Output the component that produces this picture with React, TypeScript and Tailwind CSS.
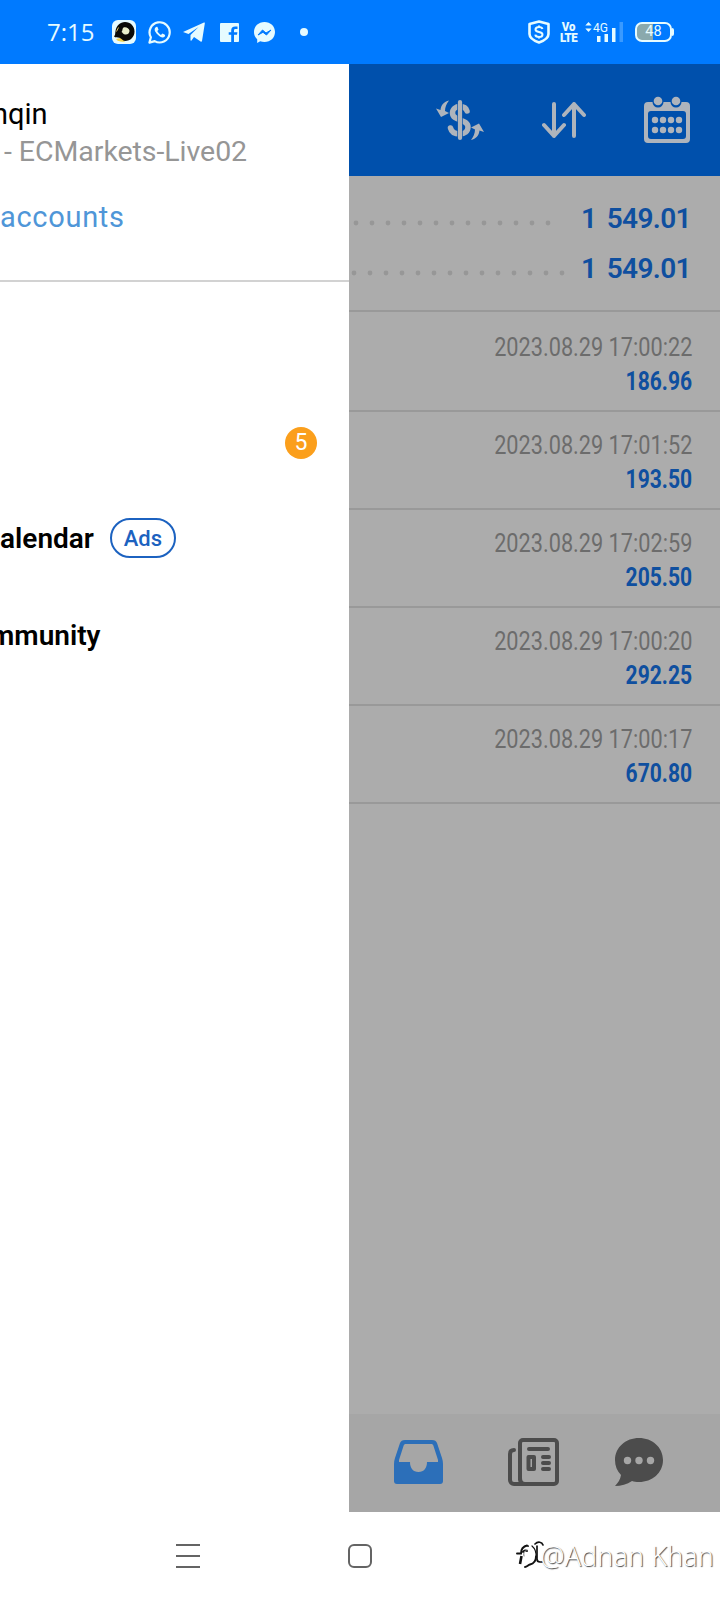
import type { ReactNode } from "react";

type Deal = {
  time: string;
  amount: string;
};

const deals: Deal[] = [
  { time: "2023.08.29 17:00:22", amount: "186.96" },
  { time: "2023.08.29 17:01:52", amount: "193.50" },
  { time: "2023.08.29 17:02:59", amount: "205.50" },
  { time: "2023.08.29 17:00:20", amount: "292.25" },
  { time: "2023.08.29 17:00:17", amount: "670.80" },
];

function StatusBar() {
  return (
    <header className="flex h-16 shrink-0 items-center bg-[#007aff] pl-[47px] text-[#e6fbff]">
      <span className="w-[65px] font-['Open_Sans',sans-serif] text-[24px] leading-none">7:15</span>
      <svg width="24" height="24" viewBox="0 0 24 24">
        <rect width="24" height="24" rx="6" fill="#e6fbff" />
        <path d="M4 19c2 2.500 5 3 9 2.500l-3-4Z" fill="#f2d24a" />
        <path d="M13 2c5.500 0 9.500 4.200 9.500 9.500S18.500 21 13 21c-2.500 0-3.500-2.500-5.500-3.200C5.500 17 3.500 18 2 16.500c1.500-1.500 1-3 1.500-5.500C4.500 5.500 8 2 13 2Z" fill="#0b0b08" />
        <path d="M11.500 7.500c2.500-1 5.500.8 6 3 .3 2.500-2 4.500-4.500 4s-2-2-3.500-2.500c1.300-1 .5-3.500 2-4.500Z" fill="#e9efcb" />
        <path d="m4.500 11.500 2-4" stroke="#d8c060" strokeWidth="1" />
      </svg>
      <svg className="ml-3" width="23" height="23" viewBox="0 0 24 24" fill="none" stroke="currentColor">
        <path d="M1.500 22.500 3 17A10.500 10.500 0 1 1 7 21Z" strokeWidth="2.300" strokeLinejoin="round" />
        <path d="M8 6.500c-2 2-1 4.500 2 7.500s5.500 4 7.500 2.200c.6-.6.5-1.600-.3-2L15 13l-1.500 1.500C12 14 10.500 12 9.700 10.500L11 9 10 6.500c-.4-.8-1.400-.6-2 0Z" fill="currentColor" stroke="none" />
      </svg>
      <svg className="ml-3" width="22" height="20" viewBox="0 0 22 20" fill="currentColor">
        <path d="M0 10 21 .6c.7-.3 1 0 .8.800L19 19c-.2.800-.8.900-1.400.500L11 15l-2.500 3.500c-.6.500-1 .2-1-.5V13l8-8L5.500 12Z" />
      </svg>
      <svg className="ml-[15px]" width="19" height="19" viewBox="0 0 19 19">
        <rect width="19" height="19" rx="1" fill="#e6fbff" />
        <path d="M11.200 19v-7.200H8.700V9.200h2.500V7.500c0-2.500 1.300-4 4-4h2.300V6h-1.800c-1.400 0-1.700.6-1.700 1.800v1.400h3.400l-.4 2.600h-3V19Z" fill="#007aff" />
      </svg>
      <svg className="ml-[15px]" width="21" height="21" viewBox="0 0 21 21">
        <path d="M10.500 0C4.500 0 0 4.300 0 10c0 3 1.200 5.500 3.200 7.300V21l3-1.700c1.300.4 2.800.7 4.300.7C16.500 20 21 15.700 21 10S16.500 0 10.500 0Z" fill="#e6fbff" />
        <path d="m4 13 4.500-5 3.500 3 5-3-4.500 5L9 10.300Z" fill="#007aff" stroke="#007aff" strokeLinejoin="round" />
      </svg>
      <span className="ml-[25px] size-2 rounded-full bg-current" />

      <svg className="ml-[220px]" width="22" height="24" viewBox="0 0 22 24" fill="none" stroke="currentColor">
        <path d="M11 1.500 20.500 4v10c0 4-4 6.500-9.500 8.500C5.500 20.500 1.500 18 1.500 14V4Z" strokeWidth="2.600" strokeLinejoin="round" />
        <path d="M14.500 9c-.5-1.500-1.800-2-3.500-2-2 0-3.500.8-3.500 2.500 0 3.500 7 1.500 7 5 0 1.700-1.500 2.500-3.500 2.500s-3.500-.8-3.700-2.300M11 5.500V7M11 17v1.500" strokeWidth="2" />
      </svg>
      <div className="ml-2.5 flex w-[17px] origin-center scale-x-[0.88] flex-col items-center font-['Roboto',sans-serif] text-[13px] leading-[11px] font-black">
        <span>Vo</span>
        <span className="-tracking-[0.6px]">LTE</span>
      </div>
      <svg className="ml-2 overflow-visible" width="38" height="22" viewBox="0 0 38 22" fill="currentColor">
        <path d="m3.500 1 3.200 3.500H.3ZM3.500 11 .3 7.500h6.400Z" />
        <path d="M12 15h3.500v6H12ZM19.500 13H23v8h-3.500ZM27 7h3.500v14H27Z" />
        <path d="M34.500 1H38v20h-3.500Z" opacity=".25" />
        <text x="8" y="11" fontFamily="Roboto, sans-serif" fontSize="13.500" textLength="15" lengthAdjust="spacingAndGlyphs">
          4G
        </text>
      </svg>
      <div className="ml-[12px] flex items-center">
        <span className="flex h-5 w-[37px] items-center justify-center rounded-[7px] border-2 border-current bg-linear-to-r from-[#8aa9ad] from-48% to-transparent to-48% font-['Roboto',sans-serif] text-[14.5px] leading-none">
          48
        </span>
        <span className="h-2 w-0.5 rounded-r bg-current" />
      </div>
    </header>
  );
}

function Drawer() {
  return (
    <aside className="flex w-[349px] shrink-0 flex-col overflow-hidden bg-white whitespace-nowrap">
      <div className="h-[218px] shrink-0 border-b-2 border-[#d2d2d2] pt-8">
        <p className="-ml-[8px] text-[29px] leading-9 text-black">nqin</p>
        <p className="ml-1 text-[28.5px] leading-10 -tracking-[0.05px] text-[#969696]">- ECMarkets-Live02</p>
        <p className="mt-[27px] text-[29px] leading-9 tracking-[0.7px] text-[#4f96d8]">accounts</p>
      </div>
      <nav className="flex flex-col pt-28">
        <div className="flex h-[97px] items-center justify-end pr-8">
          <span className="flex size-8 items-center justify-center rounded-full bg-[#fb9f1c] text-[23px] leading-none text-white">5</span>
        </div>
        <div className="flex h-[94px] items-center">
          <span className="pt-px text-[28px] font-semibold text-black">alendar</span>
          <span className="ml-4 flex h-10 w-[66px] items-center justify-center rounded-full border-2 border-[#1c62c0] text-[22px] font-medium text-[#1c62c0]">
            Ads
          </span>
        </div>
        <div className="flex h-[101px] items-center">
          <span className="-ml-[10px] text-[28px] font-semibold text-black">mmunity</span>
        </div>
      </nav>
    </aside>
  );
}

function Toolbar() {
  return (
    <div className="flex h-28 shrink-0 items-center bg-[#0050ac] pl-[87px] text-[#aeb4bc]">
      <svg width="48" height="42" viewBox="0 0 48 42" fill="none" stroke="currentColor" strokeLinecap="round">
        <path d="M31 12c-1-3-3.500-4.500-7-4.500-4.500 0-7.500 2.500-7.500 6.500 0 8.500 15.500 5.500 15.500 14 0 4.500-3.500 7-8 7-5 0-8.500-2-9.500-6" strokeWidth="5.500" />
        <path d="M24 3v36" stroke="#0050ac" strokeWidth="5.500" strokeLinecap="butt" />
        <path d="M24 3v36" strokeWidth="4.200" />
        <path d="M13 1.500C8 2.500 5 6 4.500 11L0 9.500 5 18l8-4-4-2c0-4 1.500-7 4-10.500ZM35 41c5-1 8-4.500 8.500-9.500L48 33l-5-8.500-8 4 4 2c0 4-1.500 7-4 10.500Z" fill="currentColor" stroke="none" />
      </svg>
      <svg className="ml-[58px]" width="44" height="38" viewBox="0 0 44 38" fill="none" stroke="currentColor" strokeWidth="4" strokeLinecap="round" strokeLinejoin="round">
        <path d="M12 3v32M2 24l10 11 10-11M32 35V3M22 14 32 3l10 11" />
      </svg>
      <svg className="ml-[58px]" width="46" height="48" viewBox="0 0 46 48">
        <path fillRule="evenodd" d="M4 6h38a4 4 0 0 1 4 4v33a4 4 0 0 1-4 4H4a4 4 0 0 1-4-4V10a4 4 0 0 1 4-4Zm3 9a3 3 0 0 0-3 3v22a3 3 0 0 0 3 3h32a3 3 0 0 0 3-3V18a3 3 0 0 0-3-3Z" fill="currentColor" />
        <path d="M14 5v1M32 5v1" stroke="#0050ac" strokeWidth="11" strokeLinecap="round" />
        <circle cx="14" cy="5" r="4.300" fill="currentColor" />
        <circle cx="32" cy="5" r="4.300" fill="currentColor" />
        {[24, 34].map((y) => [11, 19, 27, 35].map((x) => <circle key={`${x}-${y}`} cx={x} cy={y} r="3.200" fill="currentColor" />))}
      </svg>
    </div>
  );
}

function TotalRow({ children, leader }: { children: ReactNode; leader: ReactNode }) {
  return (
    <div className="flex h-[50px] items-center justify-between pr-[29px]">
      {leader}
      <span className="text-[28px] leading-none font-semibold -tracking-[0.6px] text-[#0f4f9f] [word-spacing:4px]">{children}</span>
    </div>
  );
}

function Leader({ start, count }: { start: number; count: number }) {
  return (
    <svg className="mt-2" width="220" height="6" viewBox="0 0 220 6" fill="#979797">
      {Array.from({ length: count }, (_, i) => (
        <circle key={i} cx={start + i * 16} cy="3" r="2.400" />
      ))}
    </svg>
  );
}

function History() {
  return (
    <main className="flex-1 text-right">
      <div className="h-[136px] border-b-2 border-[#999] pt-[18px]">
        <TotalRow leader={<Leader start={7} count={13} />}>1 549.01</TotalRow>
        <TotalRow leader={<Leader start={5} count={14} />}>1 549.01</TotalRow>
      </div>
      {deals.map((deal) => (
        <div key={deal.time} className="flex h-[98px] flex-col items-end border-b-2 border-[#999] pt-4 pr-7 nth-2:h-[100px] nth-2:pt-[18px]">
          <span className="origin-right scale-x-[0.835] text-[26px] leading-[34px] text-[#6c6c6c]">{deal.time}</span>
          <span className="origin-right scale-x-[0.81] text-[26px] leading-[34px] font-bold text-[#0f4f9f]">{deal.amount}</span>
        </div>
      ))}
    </main>
  );
}

function TabBar() {
  return (
    <div className="flex h-[98px] shrink-0 items-center bg-[#a6a6a6] pb-0.5 pl-[45px]">
      <svg width="49" height="44" viewBox="0 0 49 44">
        <path fillRule="evenodd" d="M11 0h27c3 0 4 1 5 3l5 15c.7 2 1 4 1 6v17c0 2-1 3-3 3H3c-2 0-3-1-3-3V24c0-2 .3-4 1-6L6 3c1-2 2-3 5-3Zm1 4c-1.500 0-2 .6-2.500 2L5 20v2h11c0 6 3 10 8.500 10S33 28 33 22h11v-2L39.500 6C39 4.600 38.500 4 37 4Z" fill="#2c6fb9" />
      </svg>
      <svg className="ml-[65px]" width="51" height="48" viewBox="0 0 51 48" fill="none" stroke="#4c4c4c" strokeWidth="4" strokeLinecap="round" strokeLinejoin="round">
        <path d="M12 42V5a3 3 0 0 1 3-3h31a3 3 0 0 1 3 3v38a3 3 0 0 1-3 3H6a4 4 0 0 1-4-4V16q0-4 4-4M12 40q0 6 5 6M21 11h19M35 19h6M35 25h6M35 31h6" />
        <path d="M20.500 19H26v12h-5.500Z" strokeWidth="4" />
      </svg>
      <svg className="ml-14" width="48" height="48" viewBox="0 0 48 48">
        <path d="M24 0c13 0 24 9 24 22s-11 22-24 22c-3 0-5-.3-7-1-5 3.500-11 5-17 5 3-3 5.500-7 6-11C2 33 0 28 0 22 0 9 11 0 24 0Z" fill="#4c4c4c" />
        <g fill="#a6a6a6">
          <circle cx="12.500" cy="22.500" r="3.700" />
          <circle cx="24" cy="22.500" r="3.700" />
          <circle cx="35.500" cy="22.500" r="3.700" />
        </g>
      </svg>
    </div>
  );
}

function SystemNav() {
  return (
    <footer className="relative flex h-22 shrink-0 items-start bg-white pt-8 pl-44 text-[#646464]">
      <div className="flex h-6 w-6 flex-col justify-between">
        <span className="h-0.5 bg-current" />
        <span className="h-0.5 bg-current" />
        <span className="h-0.5 bg-current" />
      </div>
      <span className="ml-[148px] size-6 rounded-md border-2 border-current" />
      <div className="absolute top-[26px] right-[6px] flex items-center">
        <svg className="-mr-1" width="29" height="30" viewBox="0 0 29 30" fill="none" stroke="#111" strokeLinecap="round">
          <path d="M5.500 15 4 23" strokeWidth="2.600" strokeLinecap="butt" />
          <path d="M1 12.500h4c0-4 2-7 6-8M6 8c2-3 4-4 6-3M7 11c1-2 3-2 4-1" strokeWidth="1.900" />
          <path d="M9 26c2 0 3-2 5-2.500 4-1 6-4 6-8" strokeWidth="1.900" />
          <path d="M16 5c3.500 3 4.500 6 4 11" strokeWidth="1.200" />
          <path d="M19 3c3-3 7-2 8 1M21 5v13c0 2 1 3 3 3h2" strokeWidth="1.700" />
          <path d="M8 15c-1-4 1-5 3-6" strokeWidth="1" stroke="#777" />
        </svg>
        <span className="font-['Open_Sans',sans-serif] text-[27px] leading-9 font-light tracking-[0.2px] text-white [text-shadow:1px_1px_1px_#444]">@Adnan Khan</span>
      </div>
    </footer>
  );
}

export default function App() {
  return (
    <div className="flex h-[1600px] w-[720px] flex-col overflow-hidden bg-white font-['Roboto',sans-serif]">
      <StatusBar />
      <div className="flex h-[1448px] shrink-0">
        <Drawer />
        <section className="flex flex-1 flex-col bg-[#acacac]">
          <Toolbar />
          <History />
          <TabBar />
        </section>
      </div>
      <SystemNav />
    </div>
  );
}
